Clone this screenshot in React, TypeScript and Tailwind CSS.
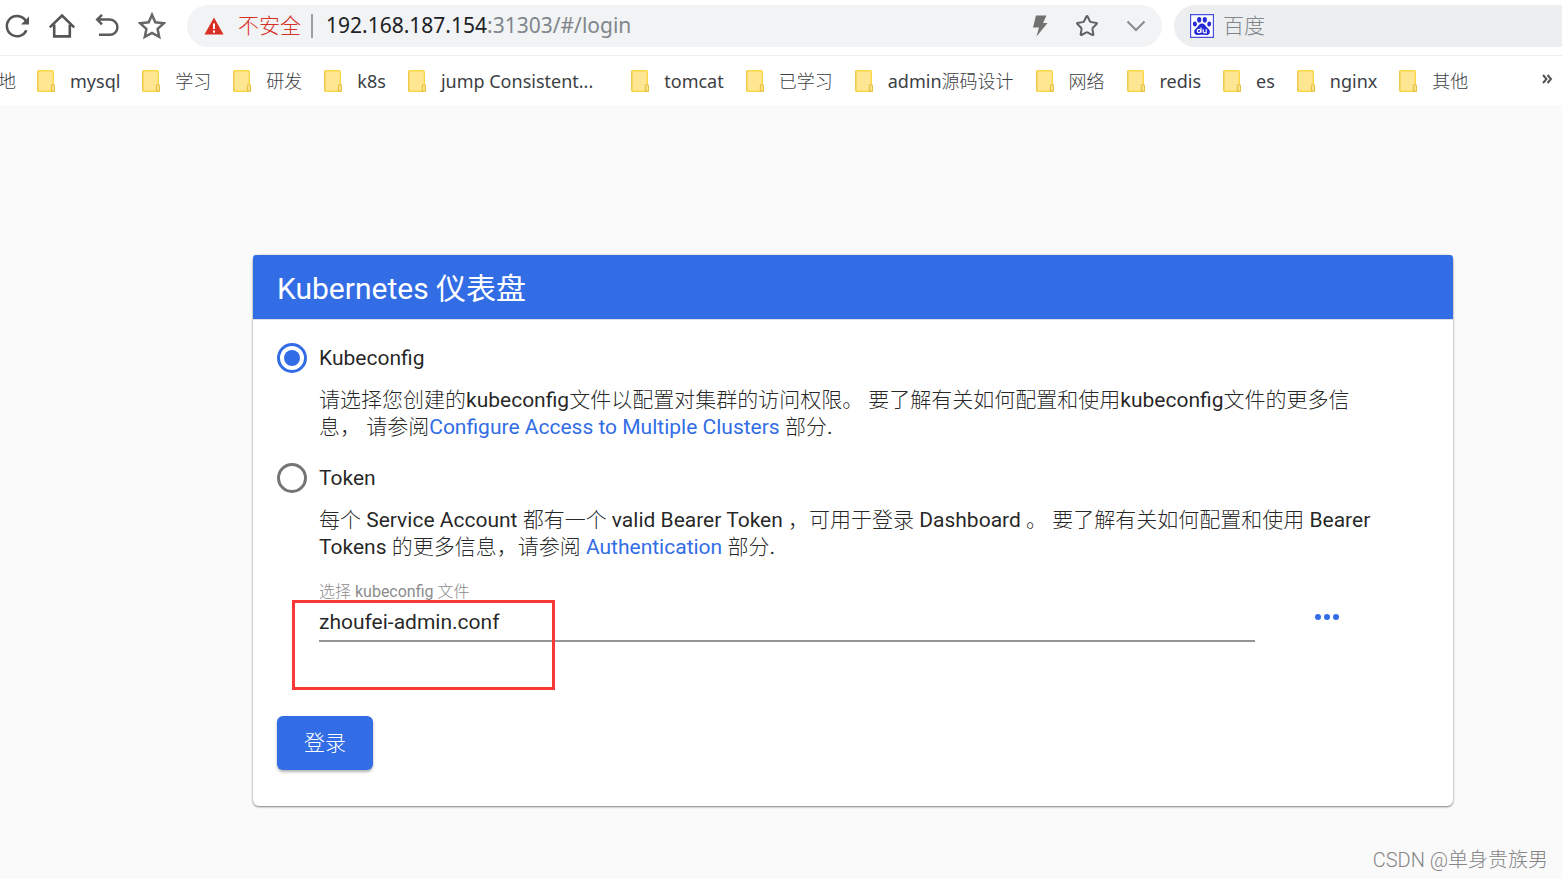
import { useState } from "react";
import { LuStar } from "react-icons/lu";

const bookmarks = [
  { label: "mysql" },
  { label: "学习" },
  { label: "研发" },
  { label: "k8s" },
  { label: "jump Consistent...", wide: true },
  { label: "tomcat" },
  { label: "已学习" },
  { label: "admin源码设计" },
  { label: "网络" },
  { label: "redis" },
  { label: "es" },
  { label: "nginx" },
  { label: "其他" },
];

const ReloadIcon = () => (
  <svg viewBox="0 0 28 28" className="h-7 w-7" fill="none" stroke="#555" strokeWidth="2.5">
    <path d="M23.4 18.2A10.2 10.2 0 1 1 21.6 7.2L23.6 9.6" />
    <path d="M26 4.400v8h-8z" fill="#555" stroke="none" />
  </svg>
);

const HomeIcon = () => (
  <svg viewBox="0 0 28 28" className="h-7 w-7" fill="none" stroke="#555" strokeWidth="2.6">
    <path d="M1.8 15.4 14 3.6l12.2 11.8" />
    <path d="M6.2 12.4v12h15.6v-12" />
  </svg>
);

const UndoIcon = () => (
  <svg viewBox="0 0 28 28" className="h-7 w-7" fill="none" stroke="#5a5a5a" strokeWidth="2.5">
    <path d="M4.5 7.6h12.3a7.600 7.600 0 0 1 0 15.2H6" />
    <path d="M9 2.8 4.2 7.6 9 12.4" />
  </svg>
);

const StarIcon = () => (
  <svg viewBox="0 0 28 28" className="h-7 w-7" fill="none" stroke="#666" strokeWidth="2.5">
    <path d="m14 2.8 3.3 7.5 8.4 1-6.100 5.600 1.600 8-7.200-3.900-7.200 3.900 1.600-8-6.100-5.600 8.400-1z" />
  </svg>
);

const FolderIcon = () => (
  <svg viewBox="0 0 18 22" className="h-[22px] w-[18px] shrink-0">
    <rect x=".7" y=".7" width="15.6" height="20.6" rx="1" fill="#ffe693" stroke="#fbd748" strokeWidth="1.4" />
    <path d="M.7 1v20" stroke="#efc94f" strokeWidth="1.2" />
    <path d="M14.4 21.2v-5.400q0-1.200 1.500-1.200t1.500 1.200v5.400z" fill="#ffe693" stroke="#e9c040" strokeWidth="1.2" />
  </svg>
);

const BaiduIcon = () => (
  <svg viewBox="0 0 24 24" className="h-6 w-6 shrink-0">
    <path d="M.6.6h22.8v22.800H.6z" fill="#fff" stroke="#4a4ee0" strokeWidth="1.2" />
    <g fill="#2529d8">
      <ellipse cx="9.2" cy="5.8" rx="2.1" ry="2.8" />
      <ellipse cx="14.8" cy="5.8" rx="2.1" ry="2.8" />
      <ellipse cx="4.9" cy="10" rx="2" ry="2.5" transform="rotate(-12 4.9 10)" />
      <ellipse cx="19.2" cy="10" rx="2" ry="2.5" transform="rotate(12 19.2 10)" />
      <path d="M12 9.600c2.400 0 3.300 2.200 5 3.800 1.800 1.600 3.200 2.700 2.800 5-.4 2.500-2.800 2.800-4.800 2.500-2-.3-4-.3-6 0s-4.400-.1-4.800-2.500c-.4-2.300 1-3.400 2.800-5 1.700-1.600 2.600-3.800 5-3.800z" />
    </g>
    <g fill="none" stroke="#fff" strokeWidth="1.2">
      <circle cx="9" cy="17" r="1.7" />
      <path d="M11 13.600v5.200M13.200 15.200v2.200q0 1.400 1.400 1.400h1.600v-3.600" />
    </g>
  </svg>
);

const Toolbar = () => (
  <div className="flex h-14 items-center gap-[17px] border-b border-[#eeeeef] bg-white pb-1 pl-[3px]">
    <button aria-label="刷新"><ReloadIcon /></button>
    <button aria-label="主页"><HomeIcon /></button>
    <button aria-label="撤销"><UndoIcon /></button>
    <button aria-label="收藏"><StarIcon /></button>

    <div className="ml-1 flex h-[42px] min-w-0 flex-1 items-center rounded-full bg-[#f1f3f4] px-4 text-[21px]">
      <svg viewBox="0 0 22 20" className="mr-[13px] h-5 w-[22px] shrink-0">
        <path d="M11 1.500 20.500 18.500h-19z" fill="#d93025" />
        <path d="M11 7.500v5.500M11 14.500v2.200" stroke="#fff" strokeWidth="2" />
      </svg>
      <span className="whitespace-nowrap text-[#d93025]">不安全</span>
      <span className="mr-[13px] ml-[10px] h-6 w-[2px] bg-[#9aa0a6]" />
      <button className="min-w-0 flex-1 truncate text-left text-[#80868b]">
        <span className="text-[#202124]">192.168.187.154</span>:31303/#/login
      </button>
      <button aria-label="加速" className="mr-[26px]">
        <svg viewBox="0 0 18 24" className="h-6 w-[18px]">
          <path d="M5 1.500h10.500L12 9h4.500L5.500 22.500 8 13.500H2z" fill="#717171" />
        </svg>
      </button>
      <button aria-label="添加书签" className="mr-[27px]">
        <LuStar className="h-6 w-6 text-[#5f6368]" />
      </button>
      <button aria-label="展开">
        <svg viewBox="0 0 20 20" className="h-5 w-5" fill="none" stroke="#888b8e" strokeWidth="2">
          <path d="m1.500 5.500 8.500 8.500 8.500-8.500" />
        </svg>
      </button>
    </div>

    <div className="-ml-[5px] flex h-[42px] w-[388px] shrink-0 items-center gap-[9px] rounded-l-full bg-[#eceef0] pl-4 text-[21px]">
      <BaiduIcon />
      <input
        aria-label="搜索"
        placeholder="百度"
        className="min-w-0 flex-1 bg-transparent outline-none placeholder:text-[#80868b]"
      />
    </div>
  </div>
);

const Bookmarks = () => (
  <nav className="flex h-[49px] items-center overflow-hidden bg-white text-lg whitespace-nowrap text-[#3c4043]">
    <a href="#local" className="-ml-[2px] mr-[21px]">地</a>
    {bookmarks.map((item) => (
      <a
        key={item.label}
        href="#bookmark"
        className={`flex shrink-0 items-center gap-[15px] ${item.wide ? "mr-[38px]" : "mr-[22px]"}`}
      >
        <FolderIcon />
        {item.label}
      </a>
    ))}
    <button aria-label="更多书签" className="mr-[9px] mb-1 ml-auto">
      <svg viewBox="0 0 12 12" className="h-3 w-3" fill="none" stroke="#555" strokeWidth="2">
        <path d="m2 2 3.500 4L2 10M6.500 2 10 6l-3.500 4" />
      </svg>
    </button>
  </nav>
);

const radioClass =
  "h-[30px] w-[30px] shrink-0 appearance-none rounded-full border-[3px] border-[#757575] bg-clip-content p-1 checked:border-[#326de6] checked:bg-[#326de6]";

const LoginCard = () => {
  const [mode, setMode] = useState("kubeconfig");

  return (
    <form
      onSubmit={(e) => e.preventDefault()}
      className="mx-auto w-full max-w-[1200px] rounded-md bg-white text-[21px] leading-[27px] text-black/87 shadow-[0_1px_2px_rgba(0,0,0,0.45),0_0_3px_rgba(0,0,0,0.15)]"
    >
      <h1 className="rounded-t-[3px] bg-[#326de6] px-6 pt-[14px] pb-[10px] font-[Roboto,'Noto_Sans_CJK_SC',sans-serif] text-3xl leading-10 text-white shadow-[0_1px_0_#dddddd]">
        Kubernetes 仪表盘
      </h1>

      <div className="px-6 pt-6 pb-9">
        <label className="flex items-center gap-3">
          <input
            type="radio"
            name="mode"
            checked={mode === "kubeconfig"}
            onChange={() => setMode("kubeconfig")}
            className={radioClass}
          />
          Kubeconfig
        </label>
        <p className="mx-[42px] mt-[14px]">
          请选择您创建的kubeconfig文件以配置对集群的访问权限。 要了解有关如何配置和使用kubeconfig文件的更多信息， 请参阅
          <a href="#clusters" className="text-[#326de6]">Configure Access to Multiple Clusters</a> 部分.
        </p>

        <label className="mt-[22px] flex items-center gap-3">
          <input
            type="radio"
            name="mode"
            checked={mode === "token"}
            onChange={() => setMode("token")}
            className={radioClass}
          />
          Token
        </label>
        <p className="mx-[42px] mt-[14px]">
          每个 Service Account 都有一个 valid Bearer Token ，可用于登录 Dashboard 。 要了解有关如何配置和使用 Bearer Tokens
          的更多信息，请参阅 <a href="#auth" className="text-[#326de6]">Authentication</a> 部分.
        </p>

        <div className="relative mx-[42px] mt-[19px] flex items-center">
          <div className="flex-1">
            <label htmlFor="file" className="block text-base leading-6 text-[#8c8c8c]">
              选择 kubeconfig 文件
            </label>
            <input
              id="file"
              defaultValue="zhoufei-admin.conf"
              className="block h-[38px] w-full border-b-2 border-[#949494] outline-none"
            />
          </div>
          <button type="button" aria-label="选择文件" className="mt-3 mr-3 ml-6 flex h-9 w-24 items-center justify-center gap-[3px]">
            <span className="h-[6px] w-[6px] rounded-full bg-[#326de6]" />
            <span className="h-[6px] w-[6px] rounded-full bg-[#326de6]" />
            <span className="h-[6px] w-[6px] rounded-full bg-[#326de6]" />
          </button>
          <div className="pointer-events-none absolute top-5 -left-[27px] h-[90px] w-[263px] border-[3px] border-[#fb3838]" />
        </div>

        <button className="mt-[74px] block rounded-md bg-[#326de6] px-[27px] pt-[14px] pb-[13px] text-white shadow-[0_2px_3px_rgba(0,0,0,0.3)]">
          登录
        </button>
      </div>
    </form>
  );
};

export default function App() {
  return (
    <div className="relative min-h-screen overflow-hidden bg-[#fafafa] font-['Noto_Sans','Noto_Sans_CJK_SC_Light','Noto_Sans_CJK_SC',sans-serif]">
      <Toolbar />
      <Bookmarks />
      <main className="pt-[150px] pl-36 font-[Roboto,'Noto_Sans_CJK_SC_Light','Noto_Sans_CJK_SC',sans-serif]">
        <LoginCard />
      </main>
      <div className="absolute right-[14px] bottom-[5px] font-[Roboto,'Noto_Sans_CJK_SC',sans-serif] text-xl font-light text-[#858585]">
        CSDN @单身贵族男
      </div>
    </div>
  );
}
